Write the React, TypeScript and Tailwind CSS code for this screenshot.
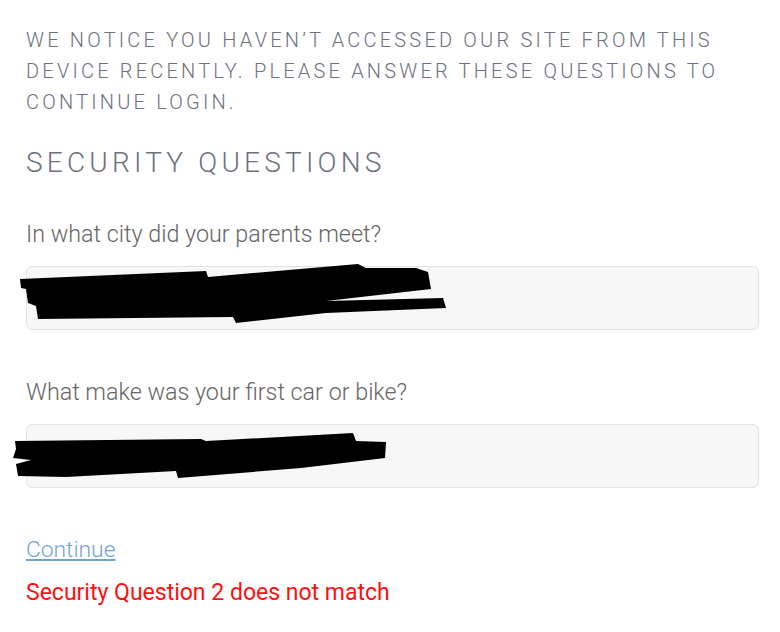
const Redact1 = () => (
  <svg className="absolute left-0 top-0 overflow-visible" width="1" height="1">
    <path
      d="M-7 12 L179 4 L181 10 L331 -3 L339 1 L389 1 L401 5 L404 22 L299 34 L416 31 L419 41 L299 46 L209 56 L206 50 L11 52 L9 39 L1 36 L-1 22 L-6 21 Z"
      fill="#000"
    />
  </svg>
);

const Redact2 = () => (
  <svg className="absolute left-0 top-0 overflow-visible" width="1" height="1">
    <path
      d="M-12 16 L174 14 L179 16 L326 8 L329 16 L359 17 L358 33 L274 43 L151 53 L149 46 L39 52 L-9 51 L-11 39 L4 35 L-14 33 L-11 24 Z"
      fill="#000"
    />
  </svg>
);

const Field = ({ label, children }: any) => (
  <div className="flex flex-col">
    <label className="text-[23.3px] font-light leading-[30px] text-[#666]">{label}</label>
    <div className="relative mt-[17px] h-[64px] rounded-[6px] border border-[#e2e2e2] bg-[#f7f7f7]">
      {children}
    </div>
  </div>
);

export default function App() {
  return (
    <div className="min-h-screen bg-white pl-[26px] pr-[21px] pt-[25px] font-['Roboto',sans-serif]">
      <p className="text-[20px] font-light uppercase leading-[31px] tracking-[0.16em] text-[#6b7280]">
        We notice you haven’t accessed our site from this device recently. Please answer these
        questions to continue login.
      </p>
      <h2 className="mt-[27px] text-[28px] font-light uppercase leading-[36px] tracking-[0.15em] text-[#6b7280]">
        Security Questions
      </h2>
      <div className="mt-[38px] flex flex-col gap-[47px]">
        <Field label="In what city did your parents meet?">
          <Redact1 />
        </Field>
        <Field label="What make was your first car or bike?">
          <Redact2 />
        </Field>
      </div>
      <div className="mt-[47px] flex flex-col gap-[13px]">
        <a href="#" className="w-fit text-[22.8px] font-light leading-[30px] text-[#6fa3d8] underline">
          Continue
        </a>
        <p className="text-[23px] leading-[30px] text-[#ff1010]">Security Question 2 does not match</p>
      </div>
    </div>
  );
}
